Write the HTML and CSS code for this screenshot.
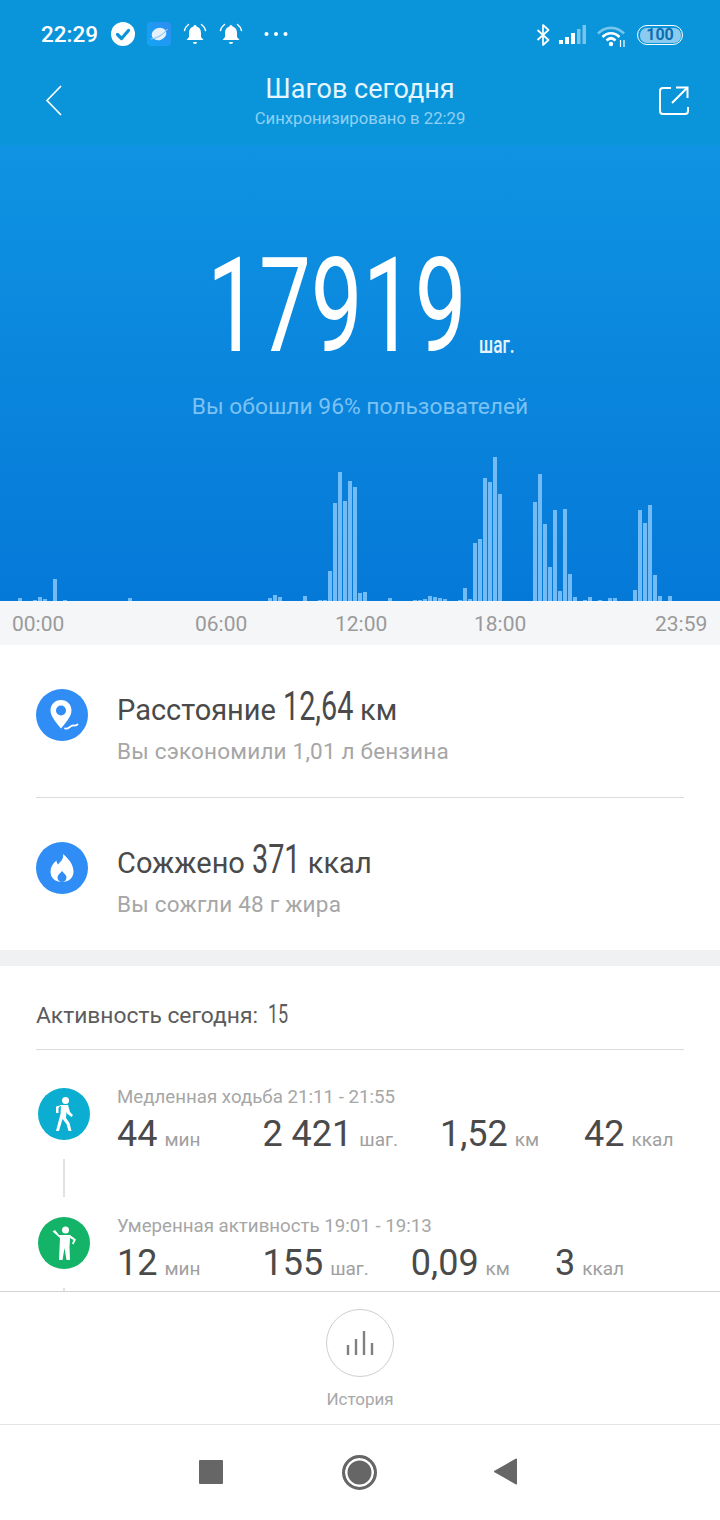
FILE: index.html
```html
<!DOCTYPE html>
<html lang="ru">
<head>
<meta charset="utf-8">
<title>Шагов сегодня</title>
<link rel="stylesheet" href="styles.css">
</head>
<body>
<div class="screen">
  <header class="top">
    <div class="status">
      <span class="clock">22:29</span>
      <svg class="si check" viewBox="0 0 24 24"><circle cx="12" cy="12" r="12" fill="#fff"/><path d="M6.5 12.5l4 4 7-8" fill="none" stroke="#0a94d8" stroke-width="3.2" stroke-linecap="round" stroke-linejoin="round"/></svg>
      <svg class="si app" viewBox="0 0 24 24"><defs><linearGradient id="ag" x1="0" y1="1" x2="1" y2="0"><stop offset="0" stop-color="#12a5f5"/><stop offset="1" stop-color="#2f8df2"/></linearGradient></defs><rect width="24" height="24" rx="4" fill="url(#ag)"/><ellipse cx="12" cy="12" rx="7.5" ry="6" fill="#e6f1fb" transform="rotate(-20 12 12)"/><path d="M3.5 17c5 0 13-4 17-10" fill="none" stroke="#8cc8f5" stroke-width="1.2"/></svg>
      <svg class="si bell" viewBox="0 0 24 24"><path d="M12 3a1.6 1.6 0 0 1 1.6 1.6c3 .8 4.4 3.2 4.4 6.4v4l2.5 3H3.5L6 15v-4c0-3.2 1.400-5.600 4.400-6.400A1.600 1.600 0 0 1 12 3z" fill="#fff"/><path d="M10 20h4a2 2 0 0 1-4 0z" fill="#fff"/><path d="M5.500 2.500C3.500 4 2 6 1.500 8.500M18.500 2.500c2 1.500 3.500 3.500 4 6" fill="none" stroke="#fff" stroke-width="1.500" stroke-linecap="round"/></svg>
      <svg class="si bell bell2" viewBox="0 0 24 24"><path d="M12 3a1.6 1.6 0 0 1 1.6 1.6c3 .8 4.4 3.2 4.4 6.4v4l2.5 3H3.500L6 15v-4c0-3.2 1.400-5.600 4.400-6.400A1.600 1.600 0 0 1 12 3z" fill="#fff"/><path d="M10 20h4a2 2 0 0 1-4 0z" fill="#fff"/><path d="M5.500 2.500C3.500 4 2 6 1.500 8.500M18.500 2.500c2 1.500 3.500 3.500 4 6" fill="none" stroke="#fff" stroke-width="1.500" stroke-linecap="round"/></svg>
      <svg class="dots" viewBox="0 0 24 6"><circle cx="2.500" cy="3" r="2" fill="#fff"/><circle cx="12" cy="3" r="2" fill="#fff"/><circle cx="21.500" cy="3" r="2" fill="#fff"/></svg>
      <span class="status-gap"></span>
      <svg class="bt" viewBox="0 0 14 22"><path d="M1.500 6l11 10-5.500 5V1l5.500 5-11 10" fill="none" stroke="#fff" stroke-width="1.700" stroke-linejoin="round"/></svg>
      <svg class="signal" viewBox="0 0 27 20"><rect x="0" y="15" width="4" height="4" fill="#fff"/><rect x="6" y="12" width="4" height="7" fill="#fff"/><rect x="12" y="8" width="4" height="11" fill="#fff"/><rect x="18" y="4" width="3.500" height="15" fill="#fff" opacity=".45"/><rect x="23.500" y="0" width="3.500" height="19" fill="#fff" opacity=".45"/></svg>
      <svg class="wifi" viewBox="0 0 30 22"><path d="M1 8.500C8.500 1 19.500 1 27 8.500" fill="none" stroke="#fff" stroke-opacity=".45" stroke-width="2.600"/><path d="M5.500 12c5-5 12-5 17 0" fill="none" stroke="#fff" stroke-width="2.600"/><path d="M9.500 15.500c3-3 6-3 9 0" fill="none" stroke="#fff" stroke-width="2.600"/><circle cx="14" cy="19" r="2.200" fill="#fff"/><path d="M23.500 15v7M27 15v7" stroke="#fff" stroke-width="1.200"/></svg>
      <span class="battery"><span class="battery-fill">100</span></span>
    </div>
    <div class="nav-bar">
      <svg class="back" viewBox="0 0 17 31"><path d="M16 1L2 15.500 16 30" fill="none" stroke="#fff" stroke-width="1.700"/></svg>
      <div class="titles">
        <h1 class="title">Шагов сегодня</h1>
        <p class="synced">Синхронизировано в 22:29</p>
      </div>
      <svg class="share" viewBox="0 0 30 29"><path d="M12 2H4a3 3 0 0 0-3 3v20a3 3 0 0 0 3 3h22a3 3 0 0 0 3-3v-4" fill="none" stroke="#fff" stroke-width="2"/><path d="M13 17L28 2M17 1.500h11.500V12" fill="none" stroke="#fff" stroke-width="2"/></svg>
    </div>
  </header>

  <section class="hero">
    <div class="count">
      <span class="count-num">17919</span>
      <span class="count-unit">шаг.</span>
    </div>
    <p class="beat">Вы обошли 96% пользователей</p>
    <div class="chart">
      <i></i><i></i><i></i><i style="height:3px"></i><i></i><i></i><i style="height:1px"></i><i style="height:4px"></i><i style="height:2px"></i><i></i>
      <i style="height:22px"></i><i></i><i style="height:1px"></i><i></i><i></i><i></i><i></i><i></i><i></i><i></i>
      <i></i><i></i><i></i><i></i><i></i><i style="height:3px"></i><i></i><i></i><i></i><i></i>
      <i></i><i></i><i></i><i></i><i></i><i></i><i></i><i></i><i></i><i></i>
      <i></i><i></i><i></i><i></i><i></i><i></i><i></i><i></i><i></i><i></i>
      <i></i><i></i><i></i><i style="height:3px"></i><i style="height:6px"></i><i style="height:4px"></i><i></i><i></i><i></i><i></i>
      <i style="height:5px"></i><i></i><i></i><i style="height:1px"></i><i style="height:1px"></i><i style="height:30px"></i><i style="height:98px"></i><i style="height:129px"></i><i style="height:100px"></i><i style="height:120px"></i>
      <i style="height:114px"></i><i style="height:8px"></i><i style="height:9px"></i><i></i><i></i><i></i><i></i><i style="height:3px"></i><i></i><i></i>
      <i></i><i></i><i style="height:1px"></i><i style="height:1px"></i><i style="height:2px"></i><i style="height:5px"></i><i style="height:4px"></i><i style="height:3px"></i><i style="height:2px"></i><i></i>
      <i></i><i style="height:1px"></i><i style="height:13px"></i><i style="height:2px"></i><i style="height:58px"></i><i style="height:62px"></i><i style="height:123px"></i><i style="height:119px"></i><i style="height:144px"></i><i style="height:107px"></i>
      <i></i><i></i><i></i><i></i><i></i><i></i><i style="height:99px"></i><i style="height:127px"></i><i style="height:77px"></i><i style="height:34px"></i>
      <i style="height:91px"></i><i style="height:10px"></i><i style="height:92px"></i><i style="height:27px"></i><i style="height:4px"></i><i></i><i style="height:1px"></i><i style="height:4px"></i><i></i><i style="height:1px"></i>
      <i></i><i style="height:3px"></i><i style="height:3px"></i><i></i><i></i><i></i><i style="height:11px"></i><i style="height:91px"></i><i style="height:78px"></i><i style="height:96px"></i>
      <i style="height:26px"></i><i style="height:5px"></i><i></i><i style="height:5px"></i>
    </div>
  </section>

  <div class="ticks">
    <span>00:00</span><span>06:00</span><span>12:00</span><span>18:00</span><span>23:59</span>
  </div>

  <main class="content">
    <section class="summary">
      <div class="stat">
        <svg class="stat-icon" viewBox="0 0 52 52"><circle cx="26" cy="26" r="26" fill="#2f8df5"/><path d="M25 11c-6 0-10.500 4.500-10.500 10.500 0 6.500 7 13.500 10.500 18 3.500-4.500 10.500-11.500 10.500-18C35.500 15.500 31 11 25 11z" fill="#fff"/><circle cx="25" cy="21.500" r="5" fill="#2f8df5"/><path d="M29 39.500c3.500 1.500 5-3.500 8.500-3 1.500.2 2.500 0 4-1" fill="none" stroke="#fff" stroke-width="1.800" stroke-linecap="round"/></svg>
        <div class="stat-body">
          <p class="stat-main">Расстояние <span class="stat-num stat-num-dist">12,64</span> км</p>
          <p class="stat-sub">Вы сэкономили 1,01 л бензина</p>
        </div>
      </div>
      <div class="stat stat-last">
        <svg class="stat-icon" viewBox="0 0 52 52"><circle cx="26" cy="26" r="26" fill="#2f8df5"/><path d="M27 12c1 5-2 7-5 10.500-1-1.500-1.500-2.500-1.500-4-3.500 3-6 6.500-6 11 0 6.500 5 10.500 11.500 10.500S37.500 36 37.500 29.500c0-7-5-13-10.500-17.500z" fill="#fff"/><path d="M26 29c-2 2.500-4.500 4-4.500 6.500 0 2.500 2 4.500 4.500 4.500s4.500-2 4.500-4.500c0-2.500-2.500-4-4.500-6.500z" fill="#2f8df5"/></svg>
        <div class="stat-body">
          <p class="stat-main">Сожжено <span class="stat-num stat-num-kcal">371</span> ккал</p>
          <p class="stat-sub">Вы сожгли 48 г жира</p>
        </div>
      </div>
    </section>

    <section class="activity">
      <h2 class="activity-head">Активность сегодня: <span class="activity-count">15</span></h2>
      <div class="timeline">
        <div class="entry">
          <div class="entry-rail">
            <svg class="entry-icon" viewBox="0 0 52 52"><circle cx="26" cy="26" r="26" fill="#0baed0"/><circle cx="27.500" cy="12.500" r="3.500" fill="#fff"/><path d="M24 17h6l2 7 3 3-1.500 2-4-3-1-2-.5 6 3.500 5 2 8h-3l-2-7-4-5-3.500 12h-3l4.500-17 .5-9-2.500 3v5h-2.500v-6.500z" fill="#fff"/></svg>
            <span class="entry-line"></span>
          </div>
          <div class="entry-body">
            <p class="entry-label">Медленная ходьба 21:11 - 21:55</p>
            <div class="metrics">
              <span class="metric metric-first"><b>44</b> <small>мин</small></span>
              <span class="metric"><b>2 421</b> <small>шаг.</small></span>
              <span class="metric"><b>1,52</b> <small>км</small></span>
              <span class="metric metric-last"><b>42</b> <small>ккал</small></span>
            </div>
          </div>
        </div>
        <div class="entry">
          <div class="entry-rail">
            <svg class="entry-icon" viewBox="0 0 52 52"><circle cx="26" cy="26" r="26" fill="#13b368"/><circle cx="27.500" cy="13" r="3.500" fill="#fff"/><path d="M14.500 14.500l2.500-1.500 4 5h11l6 4.500-2.500 5-1.500-1 1.500-3.500-3.500-2-.5 9 .5 13h-3.500l-2-12-2 12h-3.500l1-22-8-7z" fill="#fff"/></svg>
            <span class="entry-line"></span>
          </div>
          <div class="entry-body">
            <p class="entry-label">Умеренная активность 19:01 - 19:13</p>
            <div class="metrics">
              <span class="metric metric-first"><b>12</b> <small>мин</small></span>
              <span class="metric"><b>155</b> <small>шаг.</small></span>
              <span class="metric"><b>0,09</b> <small>км</small></span>
              <span class="metric metric-last"><b>3</b> <small>ккал</small></span>
            </div>
          </div>
        </div>
      </div>
    </section>
  </main>

  <div class="history">
    <span class="history-btn">
      <svg class="history-icon" viewBox="0 0 28 26"><path d="M2 25V15M10 25V9M18 25V1M26 25V13" fill="none" stroke="#808080" stroke-width="2.400"/></svg>
    </span>
    <span class="history-label">История</span>
  </div>

  <nav class="sysnav">
    <span class="sys-square"></span>
    <span class="sys-home"></span>
    <svg class="sys-back" viewBox="0 0 23 27"><path d="M23 1v25a1 1 0 0 1-1 .500L1 14.500a1 1 0 0 1 0-2L22 .500a1 1 0 0 1 1 .500z" fill="#666"/></svg>
  </nav>
</div>
</body>
</html>
```

FILE: styles.css
```css
* { box-sizing: border-box; }
html, body { margin: 0; padding: 0; }
body { width: 720px; height: 1520px; background: #fff; font-family: Roboto, "Noto Sans", sans-serif; overflow: hidden; }
p, h1, h2 { margin: 0; font-weight: 400; }

.screen { width: 720px; height: 1520px; display: flex; flex-direction: column; }

.top { height: 145px; background: #0a95da; color: #fff; display: flex; flex-direction: column; }
.status { height: 68px; padding: 23px 37px 0 41px; display: flex; align-items: flex-start; }
.clock { font-size: 22.500px; font-weight: 500; line-height: 23px; width: 58px; }
.si { width: 24px; height: 24px; flex: none; }
.check { margin-left: 12px; margin-top: -1px; }
.app { margin-left: 12px; margin-top: -1px; }
.bell { margin-left: 12px; margin-top: -1px; }
.bell2 { margin-left: 12px; }
.dots { width: 24px; height: 6px; margin-left: 21px; margin-top: 8px; }
.status-gap { flex: 1; }
.bt { width: 14px; height: 22px; margin-top: 1px; }
.signal { width: 27px; height: 20px; margin-left: 9px; margin-top: 2px; }
.wifi { width: 30px; height: 22px; margin-left: 11px; margin-top: 2px; }
.battery { width: 46px; height: 20px; margin-left: 10px; margin-top: 2px; border: 1.500px solid #fff; border-radius: 10px; padding: 1.500px; display: flex; }
.battery-fill { flex: 1; background: #8ccbf0; border-radius: 7px; color: #fff; font-size: 16px; font-weight: 700; line-height: 14px; text-align: center; color: #0a6eb0; }

.nav-bar { flex: 1; position: relative; display: flex; align-items: flex-start; justify-content: space-between; padding: 17px 31px 0 45px; }
.back { width: 17px; height: 31px; margin-top: 0; }
.titles { position: absolute; left: 0; right: 0; top: 3px; text-align: center; }
.title { font-size: 27px; line-height: 36px; color: #e6f5ff; }
.synced { font-size: 16.700px; line-height: 24px; color: #8fd0f5; }
.share { width: 30px; height: 29px; margin-top: 1px; }

.hero { height: 456px; background: linear-gradient(#0f93e2, #0579d8); display: flex; flex-direction: column; position: relative; }
.count { height: 212px; padding: 86px 0 0 207px; display: flex; align-items: flex-start; }
.count-num { display: block; font-size: 132px; line-height: 150px; color: #fff; transform: scaleX(.7); transform-origin: 0 0; width: 272px; white-space: nowrap; }
.count-unit { display: block; font-size: 24px; font-weight: 500; line-height: 28px; margin-top: 100px; color: #e8f4fd; transform: scaleX(.72); transform-origin: 0 0; }
.beat { margin-top: 35px; text-align: center; font-size: 22.800px; line-height: 30px; color: #7cc2f3; }
.chart { position: absolute; left: 3px; bottom: 0; height: 150px; display: flex; gap: 1px; align-items: flex-end; }
.chart i { display: block; width: 4px; background: #73bbf5; }

.ticks { height: 44px; background: #f5f6f8; display: grid; grid-template-columns: 76px 291px 0 0 1fr; position: relative; display: flex; padding: 10px 12px 0; font-size: 21px; line-height: 26px; color: #9a9a9a; }
.ticks span { display: block; width: 53px; flex: none; }
.ticks span:nth-child(2) { margin-left: 130px; }
.ticks span:nth-child(3) { margin-left: 87px; }
.ticks span:nth-child(4) { margin-left: 86px; }
.ticks span:nth-child(5) { margin-left: 128px; }

.content { flex: 1; min-height: 0; overflow: hidden; }
.summary { padding: 0 36px; border-bottom: 16px solid #eff1f2; }
.stat { height: 153px; display: flex; align-items: flex-start; padding-top: 44px; border-bottom: 1px solid #dcdcdc; }
.stat-last { border-bottom: 0; height: 152px; }
.stat-icon { width: 52px; height: 52px; flex: none; }
.stat-body { margin-left: 29px; }
.stat-main { font-size: 29px; line-height: 38px; color: #4a4a4a; margin-top: -1px; white-space: nowrap; height: 38px; }
.stat-num { display: inline-block; font-size: 40px; line-height: 38px; transform: scaleX(.72); transform-origin: 0 50%; vertical-align: baseline; }
.stat-num-dist { margin-right: -28px; }
.stat-num-kcal { margin-right: -19px; }
.stat-sub { font-size: 22.500px; line-height: 30px; color: #a6a6a6; margin-top: 10px; letter-spacing: .2px; }

.activity { padding: 0 36px; }
.activity-head { height: 84px; padding-top: 33px; font-size: 22.800px; line-height: 32px; color: #5c5c5c; border-bottom: 1px solid #dcdcdc; }
.activity-count { display: inline-block; font-size: 25px; transform: scaleX(.72); transform-origin: 0 50%; margin-left: 4px; }
.timeline { padding-top: 38px; }
.entry { display: flex; height: 129px; }
.entry-rail { width: 56px; padding-left: 2px; flex: none; display: flex; flex-direction: column; }
.entry-icon { width: 52px; height: 52px; flex: none; }
.entry-line { display: block; width: 2px; height: 38px; margin: 19px 0 0 25px; background: #e2e2e2; }
.entry-body { margin-left: 25px; margin-top: -3px; }
.entry-label { font-size: 18.700px; line-height: 24px; color: #a6a6a6; }
.metrics { display: flex; margin-top: 5px; gap: 42px; white-space: nowrap; }
.metric b { font-weight: 400; font-size: 36px; line-height: 40px; color: #4a4a4a; }
.metric small { font-size: 19px; color: #a0a0a0; margin-left: 3px; }
.metric-first { margin-right: 20px; }
.metric-last { margin-left: 3px; }

.history { height: 134px; flex: none; border-top: 1px solid #d2d2d2; border-bottom: 1px solid #e3e3e3; display: flex; flex-direction: column; align-items: center; padding-top: 17px; }
.history-btn { width: 68px; height: 68px; border: 1px solid #cfcfcf; border-radius: 50%; display: flex; align-items: center; justify-content: center; }
.history-icon { width: 28px; height: 26px; }
.history-label { margin-top: 10px; font-size: 17px; line-height: 24px; color: #a8a8a8; }

.sysnav { height: 95px; flex: none; position: relative; display: flex; align-items: flex-start; padding: 35px 0 0 199px; }
.sys-square { width: 24px; height: 24px; background: #666; border-radius: 1px; }
.sys-home { width: 35px; height: 35px; margin: -5px 0 0 119px; border-radius: 50%; border: 3px solid #666; box-shadow: inset 0 0 0 2.500px #fff; background: #666; }
.sys-back { width: 23px; height: 27px; margin: -2px 0 0 117px; }
```
